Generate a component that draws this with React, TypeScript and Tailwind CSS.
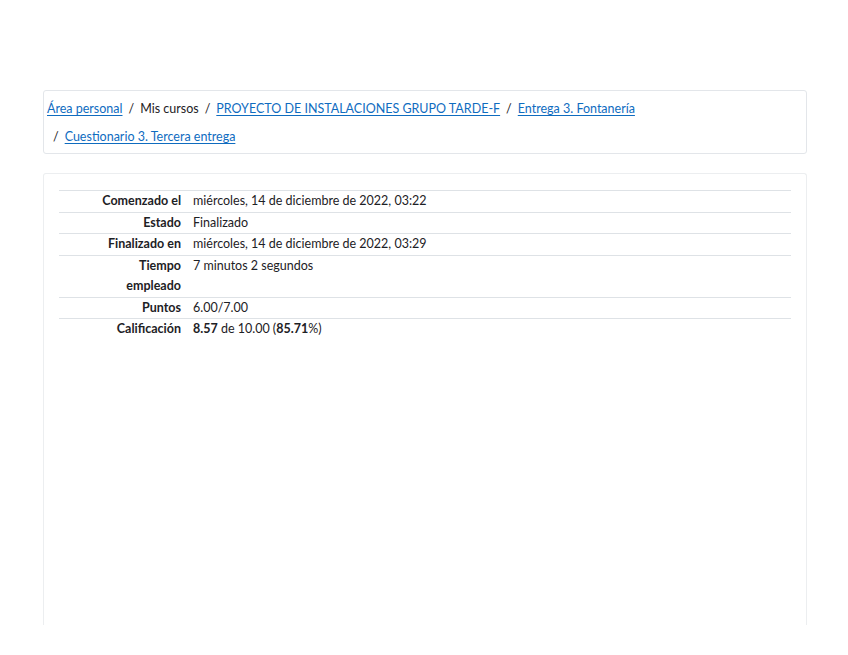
const rows: { label: string; value: React.ReactNode }[] = [
  { label: "Comenzado el", value: "miércoles, 14 de diciembre de 2022, 03:22" },
  { label: "Estado", value: "Finalizado" },
  { label: "Finalizado en", value: "miércoles, 14 de diciembre de 2022, 03:29" },
  { label: "Tiempo empleado", value: "7 minutos 2 segundos" },
  { label: "Puntos", value: "6.00/7.00" },
  {
    label: "Calificación",
    value: (
      <>
        <b className="font-bold">8.57</b> de 10.00 (<b className="font-bold">85.71</b>%)
      </>
    ),
  },
];

function Crumb({ children }: { children: React.ReactNode }) {
  return <a href="#" className="text-[#0f6cbf] underline underline-offset-2">{children}</a>;
}

function Sep() {
  return <span className="px-[6px] text-[#1d2125]">/</span>;
}

export default function App() {
  return (
    <div className="min-h-[655px] bg-white pt-[90px] font-['Lato',sans-serif] text-[12.5px] text-[#1d2125]">
      <nav className="ml-[43px] w-[764px] rounded-[3px] border border-[#e3e6ea] px-[3px] pb-[2px] pt-[4px] leading-[28px]">
        <div>
          <Crumb>Área personal</Crumb>
          <Sep />
          <span>Mis cursos</span>
          <Sep />
          <Crumb>PROYECTO DE INSTALACIONES GRUPO TARDE-F</Crumb>
          <Sep />
          <Crumb>Entrega 3. Fontanería</Crumb>
        </div>
        <div>
          <Sep />
          <Crumb>Cuestionario 3. Tercera entrega</Crumb>
        </div>
      </nav>

      <section className="ml-[43px] mt-[19px] h-[452px] w-[764px] rounded-t-[3px] border border-b-0 border-[#eceef0] px-[15px] pt-[16px]">
        <table className="w-full border-collapse leading-[20.5px]">
          <tbody>
            {rows.map((r) => (
              <tr key={r.label} className="border-t border-[#dee2e6] align-top">
                <th className="w-[134px] py-0 pl-[30px] pr-[12px] text-right font-bold">{r.label}</th>
                <td className="py-0 text-left">{r.value}</td>
              </tr>
            ))}
          </tbody>
        </table>
      </section>
    </div>
  );
}
